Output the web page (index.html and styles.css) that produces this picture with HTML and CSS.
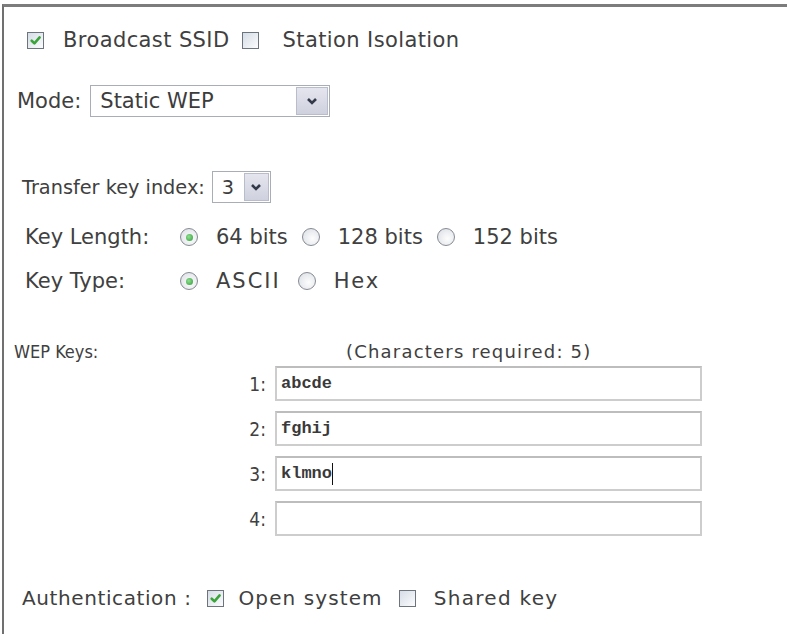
FILE: index.html
```html
<!DOCTYPE html>
<html>
<head>
<meta charset="utf-8">
<link rel="stylesheet" href="styles.css">
</head>
<body>
<div class="frame">
  <div class="row r-ssid">
    <span class="cb on"><svg viewBox="0 0 12 12"><path d="M2.5 6.2 L5 8.7 L9.8 3.2" /></svg></span>
    <span class="lbl l-bcast">Broadcast SSID</span>
    <span class="cb"></span>
    <span class="lbl l-iso">Station Isolation</span>
  </div>

  <div class="row r-mode">
    <span class="lbl">Mode:</span>
    <div class="sel sel-mode"><span class="sel-val">Static WEP</span><span class="sel-btn"><svg viewBox="0 0 12 8"><path d="M2 2 L6 6 L10 2" /></svg></span></div>
  </div>

  <div class="row r-idx">
    <span class="lbl">Transfer key index:</span>
    <div class="sel sel-idx"><span class="sel-val">3</span><span class="sel-btn"><svg viewBox="0 0 12 8"><path d="M2 2 L6 6 L10 2" /></svg></span></div>
  </div>

  <div class="row r-len">
    <span class="lbl col">Key Length:</span>
    <span class="rd on"></span><span class="lbl opt">64 bits</span>
    <span class="rd"></span><span class="lbl opt">128 bits</span>
    <span class="rd"></span><span class="lbl opt">152 bits</span>
  </div>

  <div class="row r-type">
    <span class="lbl col">Key Type:</span>
    <span class="rd on"></span><span class="lbl opt t-ascii">ASCII</span>
    <span class="rd"></span><span class="lbl opt t-hex">Hex</span>
  </div>

  <div class="row r-wep">
    <span class="lbl wep-l">WEP Keys:</span>
    <span class="lbl wep-req">(Characters required: 5)</span>
  </div>

  <div class="keys">
    <div class="key"><span class="kn">1:</span><div class="field">abcde</div></div>
    <div class="key"><span class="kn">2:</span><div class="field">fghij</div></div>
    <div class="key"><span class="kn">3:</span><div class="field">klmno<span class="caret"></span></div></div>
    <div class="key"><span class="kn">4:</span><div class="field"></div></div>
  </div>

  <div class="row r-auth">
    <span class="lbl a-l">Authentication :</span>
    <span class="cb on"><svg viewBox="0 0 12 12"><path d="M2.5 6.2 L5 8.7 L9.8 3.2" /></svg></span>
    <span class="lbl a-o">Open system</span>
    <span class="cb"></span>
    <span class="lbl a-s">Shared key</span>
  </div>
</div>
</body>
</html>
```

FILE: styles.css
```css
html, body {
  margin: 0;
  padding: 0;
  background: #fff;
  height: 100%;
}

body {
  padding: 4px 0 0 2px;
  box-sizing: border-box;
  font-family: "DejaVu Sans", Verdana, sans-serif;
  color: #404040;
}

.frame {
  border-top: 3px solid #7c7c7c;
  border-left: 2px solid #707070;
  height: 100%;
  box-sizing: border-box;
}

.row {
  display: flex;
  align-items: center;
}

.lbl {
  white-space: nowrap;
}

/* checkboxes */
.cb {
  width: 15px;
  height: 15px;
  border: 1px solid #6c747e;
  background: linear-gradient(135deg, #d6dde6, #fbfcfd);
  display: inline-flex;
  align-items: center;
  justify-content: center;
  flex: none;
}
.cb svg {
  width: 13px;
  height: 13px;
  fill: none;
  stroke: #3aa33a;
  stroke-width: 2.4;
  stroke-linecap: round;
  stroke-linejoin: round;
}

/* radio buttons */
.rd {
  width: 16px;
  height: 16px;
  border: 1px solid #858b93;
  border-radius: 50%;
  background: radial-gradient(circle at 60% 60%, #fdfdfd, #d9dde3);
  flex: none;
  position: relative;
}
.rd.on::after {
  content: "";
  position: absolute;
  left: 4.5px;
  top: 4.5px;
  width: 7px;
  height: 7px;
  border-radius: 50%;
  background: radial-gradient(circle at 40% 40%, #8fe08f, #2f9a3a);
}

/* row 1 */
.r-ssid {
  margin-top: 17px;
  height: 32px;
  padding-left: 23px;
  font-size: 21px;
  letter-spacing: 0.4px;
}
.l-bcast { margin-left: 19px; margin-right: 12px; }
.l-iso { margin-left: 24px; }

/* select boxes */
.sel {
  display: flex;
  align-items: stretch;
  border: 1px solid #a9aeb6;
  background: #fff;
  box-sizing: border-box;
  padding: 1px;
}
.sel-val {
  flex: 1;
  display: flex;
  align-items: center;
  padding-left: 8px;
  color: #3c3c3c;
}
.sel-btn {
  width: 30px;
  background: linear-gradient(#e4e5ee, #cfd1de);
  border: 1px solid #b9bccb;
  display: flex;
  align-items: center;
  justify-content: center;
}
.sel-btn svg {
  width: 12px;
  height: 8px;
  fill: none;
  stroke: #333a4a;
  stroke-width: 2.6;
}

.r-mode {
  margin-top: 29px;
  padding-left: 13px;
  font-size: 21px;
}
.sel-mode {
  margin-left: 9px;
  width: 240px;
  height: 32px;
}

.r-idx {
  margin-top: 54px;
  padding-left: 18px;
  font-size: 19.3px;
}
.sel-idx {
  margin-left: 7px;
  width: 59px;
  height: 32px;
}
.sel-idx .sel-btn { width: 23px; }

/* radio rows */
.r-len, .r-type {
  height: 30px;
  padding-left: 21px;
  font-size: 21px;
}
.r-len { margin-top: 19px; }
.r-type { margin-top: 14px; }
.col { width: 155px; }
.opt { margin-left: 18px; margin-right: 14px; }
.t-ascii { letter-spacing: 2px; margin-right: 17px; }
.t-hex { letter-spacing: 1.8px; }

/* WEP keys */
.r-wep {
  margin-top: 43px;
  height: 24px;
  font-size: 17.5px;
}
.wep-l {
  margin-left: 10px;
  width: 332px;
  font-size: 18px;
  font-family: "DejaVu Sans Condensed", "DejaVu Sans", sans-serif;
}
.wep-req {
  font-size: 18px;
  letter-spacing: 1.2px;
}

.keys {
  margin-top: 3px;
  display: flex;
  flex-direction: column;
  gap: 10px;
}
.key {
  display: flex;
  align-items: center;
  height: 35px;
}
.kn {
  width: 262px;
  text-align: right;
  font-family: "DejaVu Sans Condensed", "DejaVu Sans", sans-serif;
  font-size: 19px;
  margin-right: 9px;
}
.field {
  width: 427px;
  height: 35px;
  box-sizing: border-box;
  border: 2px solid #cdcdcd;
  border-top-color: #bdbdbd;
  display: flex;
  align-items: center;
  padding-left: 4px;
  font-family: "Liberation Mono", monospace;
  font-size: 17px;
  font-weight: bold;
  color: #3a3a3a;
}
.caret {
  display: inline-block;
  width: 1px;
  height: 22px;
  background: #111;
}

/* authentication */
.r-auth {
  margin-top: 47px;
  height: 30px;
  padding-left: 18px;
  font-size: 20px;
  letter-spacing: 0.6px;
}
.a-l { margin-right: 15px; }
.a-o { margin-left: 15px; margin-right: 16px; letter-spacing: 1.1px; }
.a-s { margin-left: 18px; letter-spacing: 1.3px; }
```
